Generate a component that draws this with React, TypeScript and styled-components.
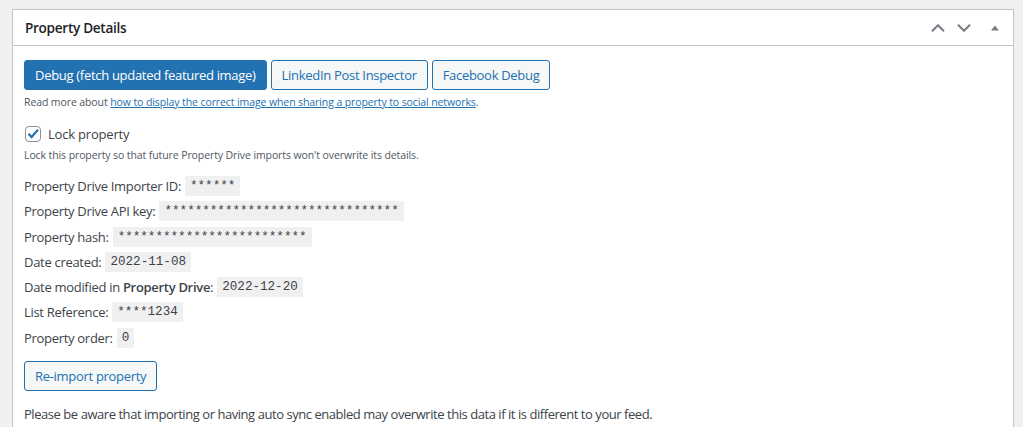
import React from 'react';
import styled, { createGlobalStyle } from 'styled-components';

const GlobalStyle = createGlobalStyle`
  html, body {
    margin: 0;
    padding: 0;
    background: #f0f0f1;
  }
  body {
    font-family: "Open Sans", "Noto Sans", sans-serif;
    font-size: 13px;
    color: #3c434a;
    overflow: hidden;
  }
`;

const Page = styled.div`
  padding: 9px 9px 0 12px;
`;

const Postbox = styled.div`
  background: #fff;
  border: 1px solid #c3c4c7;
  min-height: 440px;
`;

const Header = styled.div`
  display: flex;
  align-items: center;
  height: 35px;
  border-bottom: 1px solid #c3c4c7;
  padding-left: 12px;
`;

const Title = styled.h2`
  margin: 0;
  font-size: 13.6px;
  font-weight: 600;
  color: #1d2327;
  letter-spacing: -0.3px;
`;

const HandleActions = styled.div`
  margin-left: auto;
  display: flex;
  height: 100%;
`;

const HandleButton = styled.button<{ $wide?: boolean }>`
  width: ${(p) => (p.$wide ? 36 : 26)}px;
  height: 100%;
  padding: 0;
  border: 0;
  background: none;
  display: flex;
  align-items: center;
  justify-content: center;
  color: #787c82;
  cursor: pointer;
`;

const Inside = styled.div`
  padding: 14px 12px 12px 11px;
`;

const ButtonRow = styled.div`
  display: flex;
  gap: 4px;
`;

const Button = styled.button<{ $primary?: boolean }>`
  height: 30px;
  padding: 0 10px;
  border: 1px solid #2271b1;
  border-radius: 3px;
  background: ${(p) => (p.$primary ? '#2271b1' : '#f6f7f7')};
  color: ${(p) => (p.$primary ? '#fff' : '#2271b1')};
  font-family: inherit;
  font-size: 13px;
  letter-spacing: -0.3px;
  cursor: pointer;
`;

const Description = styled.p<{ $top?: number }>`
  margin: ${(p) => p.$top ?? 4}px 0 0;
  font-size: 10.5px;
  line-height: 16px;
  color: #50575e;
  letter-spacing: -0.1px;

  a {
    color: #2271b1;
  }
`;

const CheckRow = styled.label`
  display: flex;
  align-items: center;
  gap: 7px;
  height: 20px;
  margin-top: 14px;
  font-size: 13px;
  letter-spacing: -0.2px;
`;

const CheckBox = styled.span`
  width: 14px;
  height: 14px;
  border: 1px solid #8c8f94;
  border-radius: 4px;
  display: flex;
  align-items: center;
  justify-content: center;
  margin-left: 1px;
`;

const Fields = styled.div`
  margin-top: 13px;
  display: flex;
  flex-direction: column;
  gap: 5.3px;
`;

const Field = styled.div`
  display: flex;
  align-items: center;
  height: 20px;
  letter-spacing: -0.3px;
  white-space: pre;

  b {
    font-weight: 600;
  }
`;

const Code = styled.code`
  display: block;
  height: 20px;
  padding: 0 5px;
  margin-left: 4px;
  background: #f0f0f1;
  font-family: "Liberation Mono", "DejaVu Sans Mono", monospace;
  font-size: 12.6px;
  line-height: 21px;
  letter-spacing: 0;
  color: #3c434a;
`;

const ReimportWrap = styled.div`
  margin-top: 13px;
`;

const Note = styled.p`
  margin: 13px 0 0;
  font-size: 13px;
  line-height: 20px;
  letter-spacing: -0.45px;
`;

const Chevron = ({ up }: { up?: boolean }) => (
  <svg width="14" height="8" viewBox="0 0 14 8">
    <path
      d={up ? 'M1 7.2L7 1.2L13 7.2' : 'M1 0.8L7 6.8L13 0.8'}
      fill="none"
      stroke="currentColor"
      strokeWidth="2"
    />
  </svg>
);

const fields: { label: React.ReactNode; value: string }[] = [
  { label: 'Property Drive Importer ID:', value: '******' },
  { label: 'Property Drive API key:', value: '*******************************' },
  { label: 'Property hash:', value: '*************************' },
  { label: 'Date created:', value: '2022-11-08' },
  {
    label: (
      <>
        Date modified in <b>Property Drive</b>:
      </>
    ),
    value: '2022-12-20',
  },
  { label: 'List Reference:', value: '****1234' },
  { label: 'Property order:', value: '0' },
];

export default function App() {
  return (
    <>
      <GlobalStyle />
      <Page>
        <Postbox>
          <Header>
            <Title>Property Details</Title>
            <HandleActions>
              <HandleButton aria-label="Move up">
                <Chevron up />
              </HandleButton>
              <HandleButton aria-label="Move down">
                <Chevron />
              </HandleButton>
              <HandleButton $wide aria-label="Toggle panel">
                <svg width="8" height="6" viewBox="0 0 8 6">
                  <polygon points="0,5.5 4,0.5 8,5.5" fill="currentColor" />
                </svg>
              </HandleButton>
            </HandleActions>
          </Header>
          <Inside>
            <ButtonRow>
              <Button $primary>Debug (fetch updated featured image)</Button>
              <Button>LinkedIn Post Inspector</Button>
              <Button>Facebook Debug</Button>
            </ButtonRow>
            <Description>
              Read more about{' '}
              <a href="#">
                how to display the correct image when sharing a property to social networks
              </a>
              .
            </Description>

            <CheckRow>
              <CheckBox>
                <svg width="14" height="14" viewBox="0 0 14 14">
                  <path
                    d="M2.5 6.8L5.6 10L12 2.6"
                    fill="none"
                    stroke="#2271b1"
                    strokeWidth="2.2"
                  />
                </svg>
              </CheckBox>
              Lock property
            </CheckRow>
            <Description $top={3}>
              Lock this property so that future Property Drive imports won't overwrite its details.
            </Description>

            <Fields>
              {fields.map((f, i) => (
                <Field key={i}>
                  {f.label}
                  <Code>{f.value}</Code>
                </Field>
              ))}
            </Fields>

            <ReimportWrap>
              <Button>Re-import property</Button>
            </ReimportWrap>
            <Note>
              Please be aware that importing or having auto sync enabled may overwrite this data if it is
              different to your feed.
            </Note>
          </Inside>
        </Postbox>
      </Page>
    </>
  );
}
